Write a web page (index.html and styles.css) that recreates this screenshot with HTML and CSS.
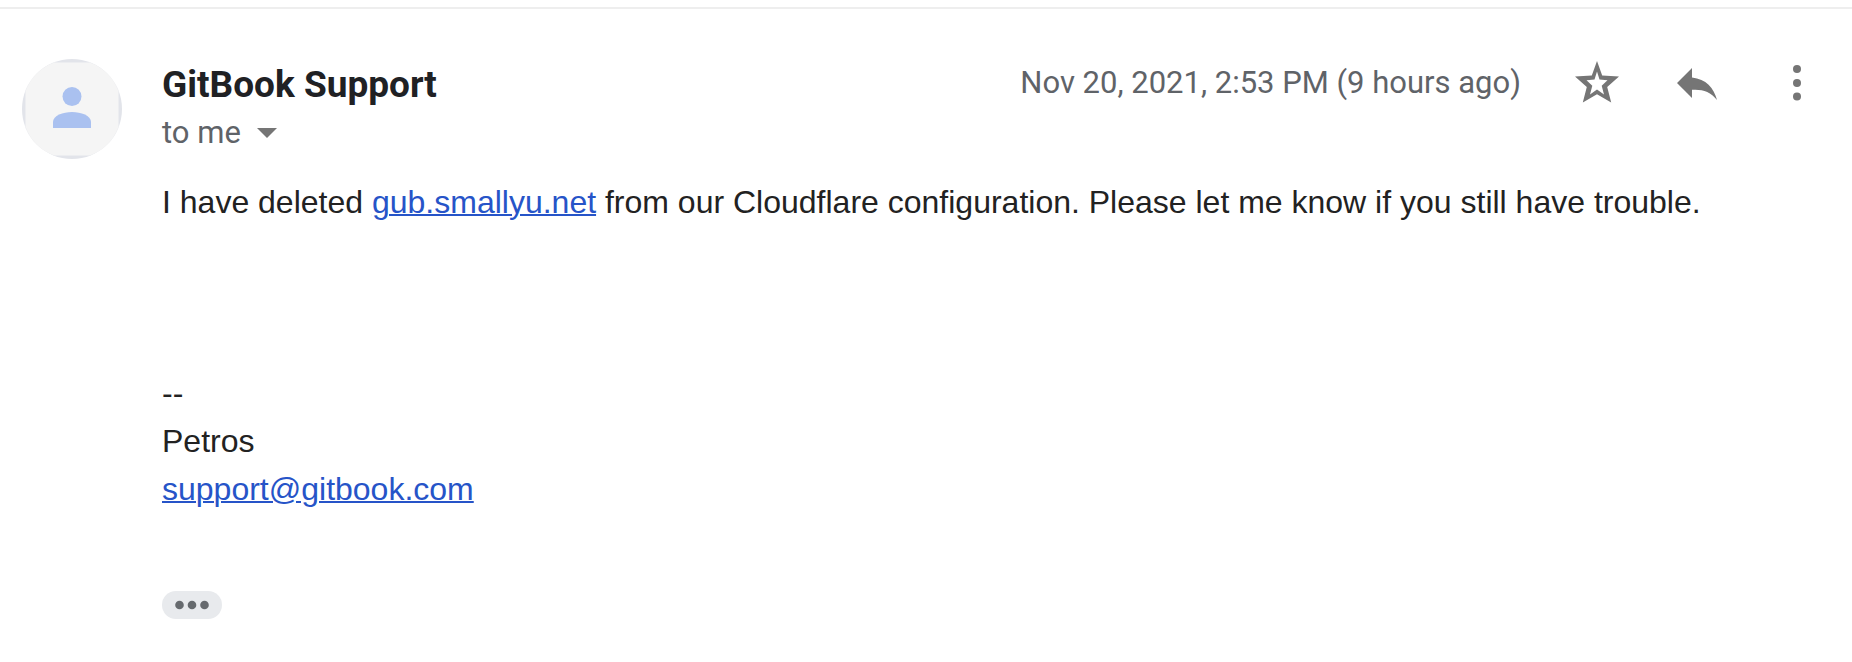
FILE: index.html
```
<!DOCTYPE html>
<html lang="en">
<head>
<meta charset="utf-8">
<title>GitBook Support</title>
<link rel="stylesheet" href="styles.css">
</head>
<body>
<article class="message">
  <div class="avatar">
    <svg class="avatar-icon" viewBox="0 0 100 100" aria-hidden="true">
      <circle cx="50" cy="50" r="50" fill="#e2e4ea"/>
      <path d="M32 3.500H68A49.600 49.600 0 0 1 96.500 32V68A49.600 49.600 0 0 1 68 96.500H32A49.600 49.600 0 0 1 3.500 68V32A49.600 49.600 0 0 1 32 3.500Z" fill="#f5f5f5"/>
      <circle cx="50" cy="37.500" r="9.500" fill="#aac1f0"/>
      <path d="M31 69V63C31 56.500 41 53 50 53S69 56.500 69 63V69Z" fill="#aac1f0"/>
    </svg>
  </div>
  <div class="content">
    <header class="head">
      <div class="from">
        <h1 class="sender">GitBook Support</h1>
        <button class="recipients" type="button">to me
          <svg class="caret" viewBox="0 0 20 10" aria-hidden="true"><path d="M0 0H20L10 10Z" fill="#757575"/></svg>
        </button>
      </div>
      <time class="date" datetime="2021-11-20T14:53">Nov 20, 2021, 2:53 PM (9 hours ago)</time>
      <div class="actions">
        <button class="action" type="button" aria-label="Star">
          <svg class="icon" viewBox="0 0 44 44" aria-hidden="true"><path fill="#757575" fill-rule="evenodd" d="M22 0L27.200 14.500L44 15.500L32.200 26L36.200 41.500L22 33.200L7.800 41.500L11.800 26L0 15.500L16.800 14.500ZM22 10.500L19.500 18.500L11.500 19.300L17.300 24.800L15 33.500L22 28.500L29 33.500L26.700 24.800L32.500 19.300L24.500 18.500Z"/></svg>
        </button>
        <button class="action" type="button" aria-label="Reply">
          <svg class="icon" viewBox="0 0 44 44" aria-hidden="true"><path fill="#757575" d="M2 22L17 7V16.500C31 18 39 27 42 39C35.500 30.500 27 28 17 28.800V37Z"/></svg>
        </button>
        <button class="action" type="button" aria-label="More">
          <svg class="icon" viewBox="0 0 44 44" aria-hidden="true"><g fill="#757575"><circle cx="22" cy="8" r="4"/><circle cx="22" cy="22" r="4"/><circle cx="22" cy="35.500" r="4"/></g></svg>
        </button>
      </div>
    </header>
    <div class="body">
      <p class="line">I have deleted <a class="link" href="#">gub.smallyu.net</a> from our Cloudflare configuration. Please let me know if you still have trouble.</p>
      <div class="signature">
        <p class="line">--</p>
        <p class="line">Petros</p>
        <p class="line"><a class="link" href="#">support@gitbook.com</a></p>
      </div>
      <button class="trimmed" type="button" aria-label="Show trimmed content">
        <svg class="dots" viewBox="0 0 34 10" aria-hidden="true"><g fill="#666a6e"><circle cx="4.500" cy="5" r="4.300"/><circle cx="17" cy="5" r="4.300"/><circle cx="29.500" cy="5" r="4.300"/></g></svg>
      </button>
    </div>
  </div>
</article>
</body>
</html>
```
FILE: styles.css
```
body {
  margin: 0;
  padding-top: 7px;
  background: #fff;
  color: #222;
  font-family: "Liberation Sans", Arial, sans-serif;
}
button {
  padding: 0;
  border: 0;
  background: none;
  font: inherit;
  color: inherit;
  cursor: pointer;
}
.message {
  display: flex;
  gap: 40px;
  padding: 50px 33px 40px 22px;
  border-top: 2px solid #eee;
}
.avatar {
  flex: none;
  width: 100px;
  height: 100px;
}
.avatar-icon,
.icon,
.caret,
.dots {
  display: block;
}
.content {
  flex: 1;
  min-width: 0;
}
.head {
  display: flex;
  align-items: flex-start;
  font-family: Roboto, sans-serif;
}
.from {
  flex: 1;
}
.sender {
  margin: 0;
  font-size: 37px;
  line-height: 52px;
  font-weight: 700;
  color: #202124;
}
.recipients {
  display: flex;
  align-items: center;
  gap: 16px;
  font-size: 31px;
  line-height: 44px;
  color: #5f6368;
}
.caret {
  width: 20px;
  height: 10px;
}
.date {
  margin-right: 54px;
  font-size: 31px;
  line-height: 48px;
  color: #5f6368;
}
.actions {
  display: flex;
  gap: 56px;
}
.action {
  width: 44px;
  height: 48px;
}
.icon {
  width: 44px;
  height: 44px;
}
.body {
  padding-top: 23px;
}
.line {
  margin: 0;
  font-size: 32px;
  line-height: 48px;
}
.link {
  color: #2654c8;
  text-decoration-thickness: 2px;
}
.signature {
  padding-top: 143px;
}
.trimmed {
  display: flex;
  align-items: center;
  justify-content: center;
  width: 60px;
  height: 28px;
  margin-top: 78px;
  border-radius: 14px;
  background: #e8eaed;
}
.dots {
  width: 34px;
  height: 10px;
}
```
